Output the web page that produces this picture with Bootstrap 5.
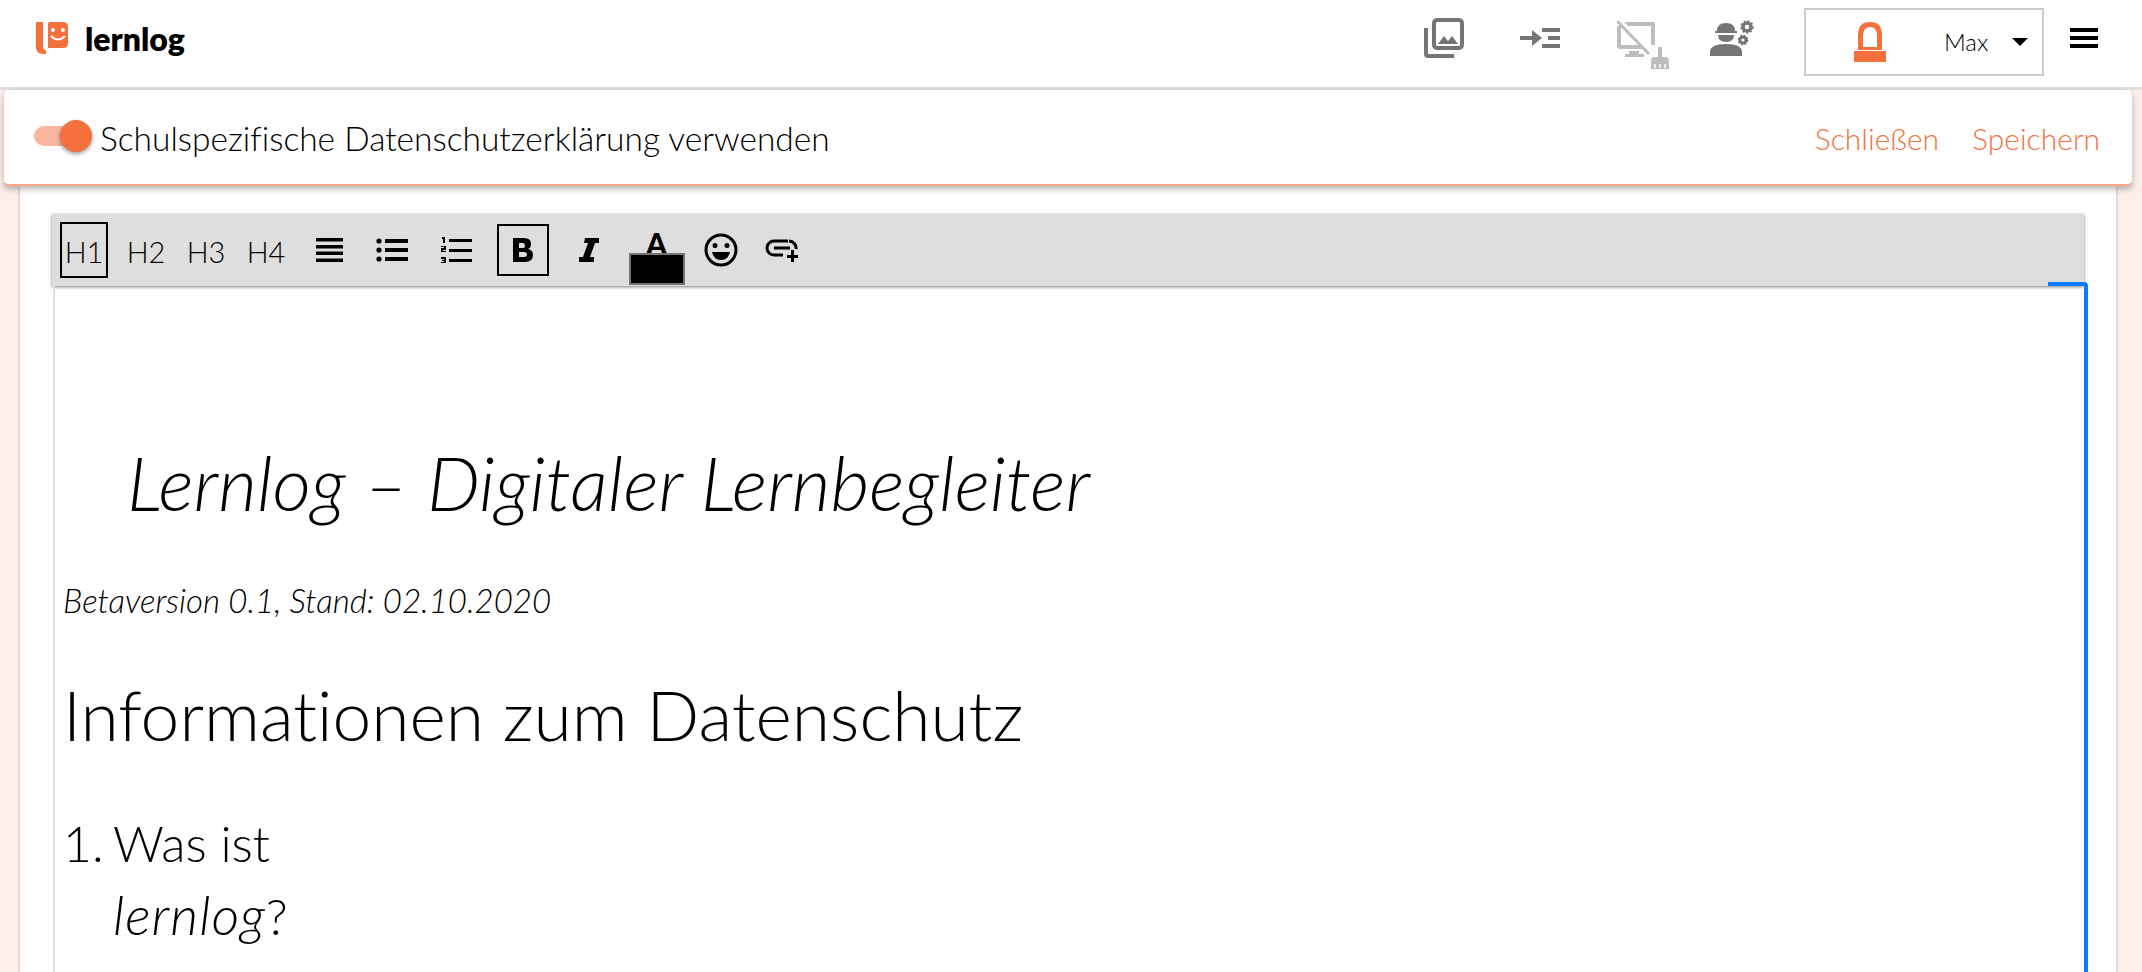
<!DOCTYPE html>
<html lang="de">
<head>
  <meta charset="UTF-8" />
  <meta name="viewport" content="width=device-width, initial-scale=1" />
  <title>lernlog</title>
  <link href="https://cdn.jsdelivr.net/npm/bootstrap@5.3.0/dist/css/bootstrap.min.css" rel="stylesheet" />
  <style>
    html, body { height: 972px; overflow: hidden; }
    body { background: #fcefea; font-family: Lato, "Noto Sans", sans-serif; font-weight: 300; color: #000; font-variant-ligatures: none; }
    .top-bar { height: 90px; background: #fff; border-bottom: 3px solid #e0e0e0; padding: 0 44px 0 36px; }
    .brand-logo { margin-bottom: 12px; flex: none; }
    .brand-name { font-weight: 800; font-size: 32px; margin-left: 17px; line-height: 1; margin-bottom: 10px; }
    .top-icons svg { display: block; }
    .ico-up { margin-top: -11px; }
    .user-box { width: 240px; height: 68px; border: 2px solid #ccc; margin-left: 50px; margin-right: 26px; margin-top: -3px; padding: 0 14px 0 48px; font-size: 24px; }
    .user-name { margin-left: 58px; font-weight: 300; }
    .caret-down { width: 0; height: 0; border-left: 8px solid transparent; border-right: 8px solid transparent; border-top: 8px solid #000; margin-left: auto; }
    .burger { width: 28px; height: 20px; margin-top: -11px; border-top: 4px solid #000; border-bottom: 4px solid #000; }
    .burger::after { content: ""; display: block; height: 4px; background: #000; margin-top: 4px; }
    .head-card { height: 96px; margin: 0 10px 0 4px; background: #fff; border-radius: 5px; border-bottom: 2px solid #ffa58c; box-shadow: 0 3px 6px rgba(0,0,0,.3); position: relative; z-index: 2; padding: 0 32px 0 30px; }
    .switch-track { width: 46px; height: 20px; border-radius: 10px; background: #f9b6a0; position: relative; margin-right: 20px; margin-top: -2px; }
    .switch-thumb { position: absolute; left: 26px; top: -6px; width: 32px; height: 32px; border-radius: 50%; background: #f4713d; box-shadow: 0 2px 4px rgba(0,0,0,.4); }
    .head-label { font-size: 33.500px; line-height: 1; margin-top: 3px; }
    .head-link { color: #f4713d; font-size: 30px; text-decoration: none; margin-left: 33px; margin-top: 2px; }
    .sheet { margin: 0 26px 0 20px; background: #fff; height: 800px; padding: 28px 32px 0; box-shadow: 0 0 3px rgba(0,0,0,.25); }
    .tool-row { height: 72px; background: #dedede; box-shadow: 0 1px 3px rgba(0,0,0,.5); padding-left: 8px; position: relative; }
    .tool-h { font-size: 29px; height: 56px; width: 48px; text-align: center; line-height: 56px; border: 2px solid transparent; margin-right: 12px; }
    .tool-on { border-color: #000; }
    .tool-ico { flex: none; display: block; }
    .bold-box { width: 52px; height: 52px; border: 2px solid #000; }
    .color-pick { width: 56px; height: 72px; position: relative; }
    .color-swatch { position: absolute; left: 0; bottom: 1px; width: 56px; height: 32px; background: #000; border: 2px solid #757575; }
    .color-a { position: absolute; left: 17px; top: 14px; font: 900 30px/1 Lato, sans-serif; }
    .edit-area { margin-left: 1px; margin-right: -4px; height: 700px; padding: 0 8px; border-left: 2px solid #e0e0e0; border-right: 4px solid #0a7cff; position: relative; }
    .corner-blue { position: absolute; right: -4px; top: -4px; width: 40px; height: 4px; background: #0a7cff; border-top-right-radius: 4px; }
    .doc-title { font-size: 75px; font-weight: 300; font-style: italic; margin: 0; padding: 154px 0 0 64px; line-height: 84px; }
    .doc-meta { font-size: 33px; font-style: italic; margin: 56px 0 0; line-height: 40px; }
    .doc-h { font-size: 69.500px; font-weight: 300; margin: 52px 0 0; line-height: 84px; }
    .doc-list { font-size: 50px; margin: 52px 0 0; padding: 0; list-style: none; line-height: 71px; display: flex; }
    .doc-list em { font-size: 54px; letter-spacing: 1px; }
    .doc-num { width: 50px; flex: none; }
  </style>
</head>
<body>
  <nav class="top-bar d-flex align-items-center">
    <svg class="brand-logo" width="32" height="32" viewBox="0 0 32 32"><path d="M0 0h7v25q0 3 3 3v4h-3q-7 0-7-7z" fill="#f4713d"/><path d="M14 0h13q5 0 5 5v16q0 5-5 5H12V2q0-2 2-2z" fill="#f4713d"/><circle cx="17" cy="8" r="2" fill="#fff"/><circle cx="27" cy="8" r="2" fill="#fff"/><path d="M15 14q7 7 14 0" fill="none" stroke="#fff" stroke-width="2"/></svg>
    <span class="brand-name">lernlog</span>
    <div class="top-icons d-flex align-items-center ms-auto">
      <svg class="ico-up" width="40" height="40" viewBox="0 0 40 40"><rect x="10" y="2" width="28" height="28" rx="3" fill="none" stroke="#757575" stroke-width="4"/><path d="M0 10h4v26h26v4H4q-4 0-4-4z" fill="#757575"/><path d="M14 26l6-8 4 5 4-5 6 8z" fill="#757575"/></svg>
      <svg class="ico-up" width="40" height="20" viewBox="0 0 40 20" style="margin-left:56px"><path d="M0 8h12V2l10 8-10 8v-6H0z" fill="#757575"/><path d="M22 0h18v4H22zM28 8h12v4H28zM22 16h18v4H22z" fill="#757575"/></svg>
      <svg width="52" height="48" viewBox="0 0 52 48" style="margin-left:57px;margin-top:3px"><path d="M7 1h29q2 0 2 2v21h-4V5H11zM0 5v20q0 3 3 3h24l-4-4H4V5zM12 30h10v3h5v3H8v-3h4z" fill="#bdbdbd"/><path d="M0 0L32 33" stroke="#bdbdbd" stroke-width="3"/><path d="M41 27q0-1 1-1t2 0 1 1v9h3q4 0 4 4v8H34v-8q0-4 4-4h3z" fill="#bdbdbd"/><path d="M38 43v4M43 43v4M48 43v4" stroke="#fff" stroke-width="1.5"/></svg>
      <svg class="ico-up" width="44" height="36" viewBox="0 0 44 36" style="margin-left:41px"><path d="M7 11q0-8 9-8t9 8h2v2H5v-2z" fill="#757575"/><path d="M8 15h16q0 7-8 7t-8-7zM0 36v-4q0-8 16-8t16 8v4z" fill="#757575"/><circle cx="37" cy="7" r="4" fill="none" stroke="#757575" stroke-width="3.500"/><circle cx="37" cy="7" r="6" fill="none" stroke="#757575" stroke-width="1.500" stroke-dasharray="2 2"/><circle cx="33" cy="20" r="3" fill="none" stroke="#757575" stroke-width="3"/><circle cx="33" cy="20" r="4.600" fill="none" stroke="#757575" stroke-width="1.500" stroke-dasharray="2 1.600"/></svg>
    </div>
    <div class="user-box d-flex align-items-center">
      <svg width="32" height="40" viewBox="0 0 32 40"><path d="M4 28V13Q4 0 16 0t12 13v15z" fill="#f4713d"/><path d="M9 25V14Q9 5 16 5t7 9v11z" fill="#fff"/><rect x="0" y="29" width="32" height="11" fill="#f4713d"/></svg>
      <span class="user-name">Max</span>
      <span class="caret-down"></span>
    </div>
    <div class="burger"></div>
  </nav>

  <div class="head-card d-flex align-items-center">
    <span class="switch-track"><span class="switch-thumb"></span></span>
    <span class="head-label">Schulspezifische Datenschutzerklärung verwenden</span>
    <a href="#" class="head-link ms-auto">Schließen</a>
    <a href="#" class="head-link">Speichern</a>
  </div>

  <main class="sheet">
    <div class="tool-row d-flex align-items-center">
      <span class="tool-h tool-on">H1</span>
      <span class="tool-h" style="margin-left:2px">H2</span>
      <span class="tool-h">H3</span>
      <span class="tool-h">H4</span>
      <svg class="tool-ico" width="27" height="24" viewBox="0 0 27 24" style="margin-left:14px"><path d="M0 0h27v3.500H0zM0 7h27v3.500H0zM0 13.500h27V17H0zM0 20.500h27V24H0z" fill="#000"/></svg>
      <svg class="tool-ico" width="32" height="24" viewBox="0 0 32 24" style="margin-left:33px"><circle cx="3" cy="3" r="2.600"/><circle cx="3" cy="12" r="2.600"/><circle cx="3" cy="21" r="2.600"/><path d="M9 1h23v4H9zM9 10h23v4H9zM9 19h23v4H9z"/></svg>
      <svg class="tool-ico" width="32" height="26" viewBox="0 0 32 26" style="margin-left:32px"><path d="M9 2h23v3H9zM9 12h23v3H9zM9 22h23v3H9z"/><path d="M2 0h3v6H3V2H2zM1 9h5v4H3v1h3v1H1v-4h3v-1H1zM1 20h5v6H1v-1h3v-1H2v-1h2v-1H1z"/></svg>
      <div class="bold-box d-flex align-items-center justify-content-center" style="margin-left:25px">
        <svg width="20" height="24" viewBox="0 0 20 24"><path fill-rule="evenodd" d="M0 0h11q7 0 7 6 0 4-3 5 5 1 5 6 0 7-8 7H0zM6 5v5h4q2 0 2-2.500T10 5zM6 14v5h5q3 0 3-2.500T11 14z"/></svg>
      </div>
      <svg class="tool-ico" width="20" height="24" viewBox="0 0 20 24" style="margin-left:30px"><path d="M6 0h14v5h-4l-5 14h4v5H0v-5h4L9 5H5z"/></svg>
      <div class="color-pick" style="margin-left:30px">
        <span class="color-a">A</span>
        <span class="color-swatch"></span>
      </div>
      <svg class="tool-ico" width="34" height="34" viewBox="0 0 34 34" style="margin-left:19px"><circle cx="17" cy="17" r="15" fill="none" stroke="#000" stroke-width="3"/><circle cx="11" cy="12.500" r="2.500"/><circle cx="23" cy="12.500" r="2.500"/><path d="M8 19h18q-2 8-9 8t-9-8z"/></svg>
      <svg class="tool-ico" width="34" height="24" viewBox="0 0 34 24" style="margin-left:26px"><path d="M24 3H10a7 7 0 0 0 0 14h9M10 10h16M32 11a7 7 0 0 0-7-8" fill="none" stroke="#000" stroke-width="3"/><path d="M27 12h3v5h4v3h-4v4h-3v-4h-4v-3h4z"/></svg>
    </div>
    <div class="edit-area">
      <span class="corner-blue"></span>
      <h1 class="doc-title">Lernlog – Digitaler Lernbegleiter</h1>
      <p class="doc-meta">Betaversion 0.1, Stand: 02.10.2020</p>
      <h2 class="doc-h">Informationen zum Datenschutz</h2>
      <ol class="doc-list">
        <li class="doc-num">1.</li>
        <li>Was ist<br><em>lernlog</em>?</li>
      </ol>
    </div>
  </main>
</body>
</html>
